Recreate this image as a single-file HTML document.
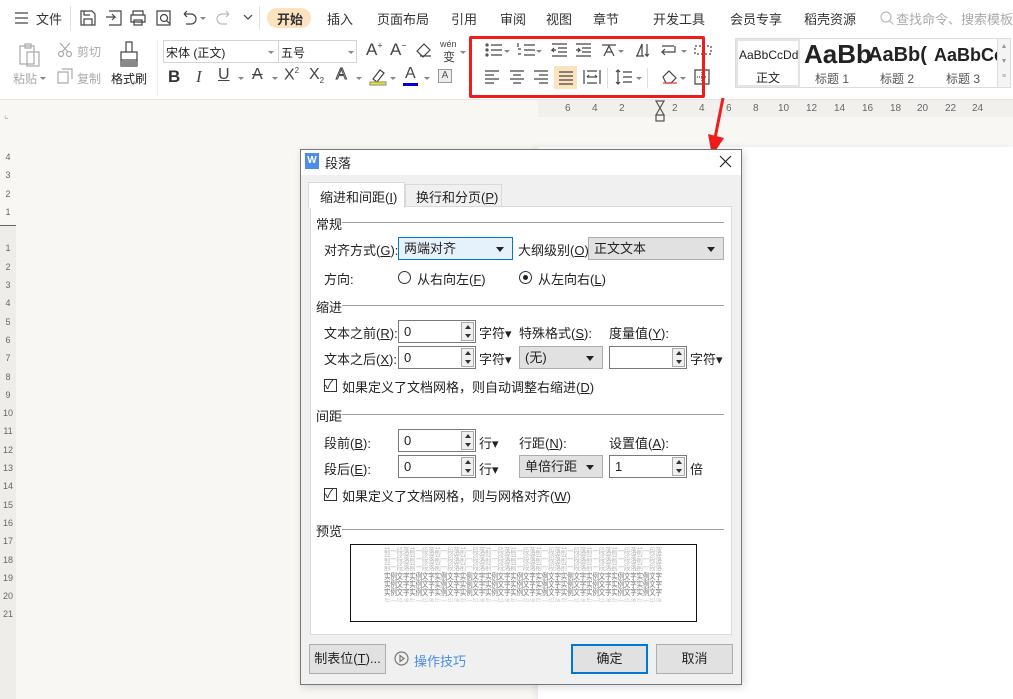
<!DOCTYPE html>
<html><head><meta charset="utf-8"><style>
*{margin:0;padding:0;box-sizing:border-box}
body{width:1013px;height:699px;overflow:hidden;position:relative;background:#f8f7f3;font-family:"Liberation Sans","Noto Sans CJK SC",sans-serif;font-size:12px;color:#222}
.a{position:absolute;white-space:nowrap}
.ic{position:absolute;stroke:#444;fill:none;stroke-width:1.2}
.tb{font-size:13px;color:#333}
.dd{position:absolute;width:0;height:0;border-left:3px solid transparent;border-right:3px solid transparent;border-top:3px solid #888}
.inp{position:absolute;background:#fff;border:1px solid #7a7a7a;height:23px;padding:2px 5px;font-size:13px;line-height:17px}
.sp{position:absolute;right:1px;top:1px;width:13px;height:19px;border:1px solid #aaa;background:#f0f0f0}
.sp:before{content:"";position:absolute;left:3px;top:2px;border-left:3px solid transparent;border-right:3px solid transparent;border-bottom:4px solid #333}
.sp:after{content:"";position:absolute;left:3px;bottom:2px;border-left:3px solid transparent;border-right:3px solid transparent;border-top:4px solid #333}
.sel{position:absolute;background:#e1e1e1;border:1px solid #adadad;height:23px;padding:2px 5px;font-size:13px;line-height:17px}
.sel i{position:absolute;right:8px;top:9px;border-left:4px solid transparent;border-right:4px solid transparent;border-top:5px solid #222}
.lb{font-size:13px;color:#222}
.grp{position:absolute;height:1px;background:#a0a0a0}
.cb{position:absolute;width:13px;height:13px;border:1px solid #333;background:#fff}
.btn{position:absolute;height:30px;background:#e1e1e1;border:1px solid #adadad;font-size:13px;text-align:center;line-height:28px}
.pv{position:absolute;left:33px;font-size:8px;letter-spacing:-.3px;line-height:8px;transform:scaleX(.82);transform-origin:0 0}
.rn{position:absolute;top:103px;font-size:10px;color:#666}
</style></head><body>
<!-- top bar -->
<div class="a" style="left:0;top:0;width:1013px;height:36px;background:#fff"></div>
<svg class="ic" style="left:14px;top:12px" width="16" height="12"><path d="M1 1h13M1 6h13M1 11h13"/></svg>
<span class="a tb" style="left:36px;top:9px">文件</span>
<div class="a" style="left:70px;top:6px;width:1px;height:24px;background:#e0e0e0"></div>
<svg class="ic" style="left:79px;top:9px" width="18" height="18"><path d="M2 2h11l3 3v11H2z M5 16v-6h8v6 M5 2v4h6"/></svg>
<svg class="ic" style="left:105px;top:9px" width="18" height="18"><path d="M4 2h12v14H4 M1 8h9l-3-3M10 8l-3 3"/></svg>
<svg class="ic" style="left:129px;top:9px" width="18" height="18"><path d="M4 6V2h10v4M2 6h14v7H2zM5 11h8v5H5z"/></svg>
<svg class="ic" style="left:155px;top:9px" width="18" height="18"><path d="M2 2h13v14H2z"/><circle cx="9" cy="9" r="3.5"/><path d="M11.5 11.5l3 3"/></svg>
<svg class="ic" style="left:180px;top:9px" width="18" height="18"><path d="M4 5h7a5 5 0 0 1 0 10H6M4 5l3-3M4 5l3 3"/></svg>
<div class="dd" style="left:200px;top:17px"></div>
<svg class="ic" style="left:215px;top:9px;stroke:#bbb" width="18" height="18"><path d="M14 5H7a5 5 0 0 0 0 10h5M14 5l-3-3M14 5l-3 3"/></svg>
<svg class="ic" style="left:243px;top:13px" width="10" height="8"><path d="M1 2l4 4 4-4"/></svg>
<div class="a" style="left:259px;top:6px;width:1px;height:24px;background:#e0e0e0"></div>
<div class="a" style="left:267px;top:8px;width:44px;height:20px;background:#fbe3c0;border-radius:10px"></div>
<span class="a tb" style="left:277px;top:9px;font-weight:bold">开始</span>
<span class="a tb" style="left:327px;top:9px">插入</span>
<span class="a tb" style="left:377px;top:9px">页面布局</span>
<span class="a tb" style="left:451px;top:9px">引用</span>
<span class="a tb" style="left:500px;top:9px">审阅</span>
<span class="a tb" style="left:546px;top:9px">视图</span>
<span class="a tb" style="left:593px;top:9px">章节</span>
<span class="a tb" style="left:653px;top:9px">开发工具</span>
<span class="a tb" style="left:730px;top:9px">会员专享</span>
<span class="a tb" style="left:804px;top:9px">稻壳资源</span>
<svg class="ic" style="left:879px;top:10px;stroke:#bbb" width="16" height="16"><circle cx="7" cy="7" r="5"/><path d="M10.5 10.5l4 4"/></svg>
<span class="a tb" style="left:896px;top:9px;color:#aaa">查找命令、搜索模板</span>
<!-- ribbon -->
<div class="a" style="left:0;top:36px;width:1013px;height:64px;background:#fff;border-bottom:1px solid #e8e6e2"></div>
<svg class="ic" style="left:17px;top:42px;stroke:#aaa" width="24" height="26"><path d="M3 4h14v18H3zM8 2h6v4H8zM10 10h12v14H10z"/></svg>
<span class="a" style="left:13px;top:70px;color:#aaa;font-size:12px">粘贴</span><div class="dd" style="left:40px;top:77px"></div>
<svg class="ic" style="left:57px;top:42px;stroke:#aaa" width="16" height="16"><circle cx="4" cy="12" r="2.5"/><circle cx="12" cy="12" r="2.5"/><path d="M5 10L13 1M11 10L3 1"/></svg>
<span class="a" style="left:77px;top:43px;color:#aaa">剪切</span>
<svg class="ic" style="left:57px;top:68px;stroke:#aaa" width="16" height="16"><path d="M1 4h10v11H1zM5 1h10v10"/></svg>
<span class="a" style="left:77px;top:70px;color:#aaa">复制</span>
<svg class="ic" style="left:117px;top:40px" width="24" height="28"><path d="M9 2h6v10H9zM4 12h16v14H4zM4 20h16" /><rect x="4" y="21" width="16" height="5" fill="#888" stroke="none"/></svg>
<span class="a" style="left:111px;top:70px;font-size:12px">格式刷</span>
<div class="a" style="left:157px;top:40px;width:1px;height:56px;background:#eee"></div>
<div class="a" style="left:163px;top:40px;width:194px;height:23px;border:1px solid #d5d5d5"></div>
<div class="a" style="left:278px;top:40px;width:1px;height:23px;background:#d5d5d5"></div>
<span class="a" style="left:166px;top:44px">宋体 (正文)</span><div class="dd" style="left:268px;top:51px"></div>
<span class="a" style="left:281px;top:44px">五号</span><div class="dd" style="left:348px;top:51px"></div>
<span class="a" style="left:366px;top:40px;font-size:17px;color:#444">A<sup style="font-size:9px">+</sup></span>
<span class="a" style="left:390px;top:40px;font-size:17px;color:#444">A<sup style="font-size:9px">−</sup></span>
<svg class="ic" style="left:415px;top:42px" width="18" height="16"><path d="M2 9l7-7 6 6-7 7zM5 14h11"/></svg>
<span class="a" style="left:440px;top:39px;font-size:9px;color:#444">wén</span><span class="a" style="left:443px;top:48px;font-size:12px;color:#444">变</span><div class="dd" style="left:460px;top:51px"></div>
<span class="a" style="left:168px;top:67px;font-size:17px;font-weight:bold;color:#333">B</span>
<span class="a" style="left:196px;top:67px;font-size:17px;font-style:italic;color:#444;font-family:'Liberation Serif'">I</span>
<span class="a" style="left:218px;top:66px;font-size:16px;text-decoration:underline;color:#444">U</span><div class="dd" style="left:238px;top:77px"></div>
<span class="a" style="left:252px;top:66px;font-size:16px;text-decoration:line-through;color:#444">A</span><div class="dd" style="left:272px;top:77px"></div>
<span class="a" style="left:284px;top:66px;font-size:16px;color:#444">X<sup style="font-size:8px">2</sup></span>
<span class="a" style="left:309px;top:66px;font-size:16px;color:#444">X<sub style="font-size:8px">2</sub></span>
<span class="a" style="left:336px;top:66px;font-size:16px;color:#fff;-webkit-text-stroke:1px #444">A</span><div class="dd" style="left:356px;top:77px"></div>
<svg class="ic" style="left:369px;top:68px" width="18" height="18"><path d="M4 11l7-9 4 3-7 9z"/><rect x="1" y="14" width="16" height="3" fill="#f5e600" stroke="#999"/></svg><div class="dd" style="left:390px;top:77px"></div>
<span class="a" style="left:405px;top:65px;font-size:16px;color:#444">A</span><div class="a" style="left:403px;top:83px;width:15px;height:3px;background:#0000dd"></div><div class="dd" style="left:424px;top:77px"></div>
<div class="a" style="left:438px;top:69px;width:14px;height:14px;border:1px solid #999;background:#eee;font-size:10px;text-align:center;line-height:12px;color:#555">A</div>
<!-- paragraph group -->
<svg class="ic" style="left:484px;top:42px" width="20" height="16"><path d="M7 3h11M7 8h11M7 13h11"/><circle cx="3" cy="3" r="1"/><circle cx="3" cy="8" r="1"/><circle cx="3" cy="13" r="1"/></svg><div class="dd" style="left:504px;top:50px"></div>
<svg class="ic" style="left:516px;top:42px" width="20" height="16"><path d="M8 3h11M8 8h11M8 13h11M2 1v4M2 7h3M2 12h3"/></svg><div class="dd" style="left:536px;top:50px"></div>
<svg class="ic" style="left:550px;top:42px" width="18" height="16"><path d="M2 2h15M8 6h9M8 10h9M2 14h15M6 8H2l2-2M2 8l2 2"/></svg>
<svg class="ic" style="left:574px;top:42px" width="18" height="16"><path d="M2 2h15M8 6h9M8 10h9M2 14h15M2 8h4l-2-2M6 8l-2 2"/></svg>
<svg class="ic" style="left:600px;top:42px" width="18" height="16"><path d="M2 3h14M4 14l5-10 5 10M6 10h6"/></svg><div class="dd" style="left:618px;top:50px"></div>
<svg class="ic" style="left:634px;top:42px" width="18" height="16"><path d="M2 14h8M3 14l5-12v12M13 2v12l-2-2M13 14l2-2"/></svg>
<svg class="ic" style="left:660px;top:42px" width="18" height="16"><path d="M2 4h12M15 4v6H2l3-3M2 10l3 3"/></svg><div class="dd" style="left:681px;top:50px"></div>
<svg class="ic" style="left:694px;top:44px" width="18" height="12"><path d="M1 2h16v8H1z" stroke-dasharray="2 2"/></svg>
<svg class="ic" style="left:484px;top:69px" width="16" height="16"><path d="M1 2h14M1 6h9M1 10h14M1 14h9"/></svg>
<svg class="ic" style="left:509px;top:69px" width="16" height="16"><path d="M1 2h14M4 6h8M1 10h14M4 14h8"/></svg>
<svg class="ic" style="left:533px;top:69px" width="16" height="16"><path d="M1 2h14M6 6h9M1 10h14M6 14h9"/></svg>
<div class="a" style="left:554px;top:66px;width:23px;height:23px;background:#fbe3c0"></div>
<svg class="ic" style="left:558px;top:70px" width="16" height="16"><path d="M1 2h14M1 6h14M1 10h14M1 14h14"/></svg>
<svg class="ic" style="left:583px;top:69px" width="18" height="16"><path d="M1 1v14M17 1v14M4 2h10M4 14h10M4 8h10M4 8l2-2M14 8l-2-2"/></svg>
<div class="a" style="left:607px;top:68px;width:1px;height:20px;background:#ddd"></div>
<svg class="ic" style="left:615px;top:69px" width="18" height="16"><path d="M3 1v14M1 3l2-2 2 2M1 13l2 2 2-2M8 3h9M8 8h9M8 13h9"/></svg><div class="dd" style="left:636px;top:77px"></div>
<div class="a" style="left:647px;top:68px;width:1px;height:20px;background:#ddd"></div>
<svg class="ic" style="left:660px;top:68px" width="20" height="18"><path d="M3 9l6-6 7 7-5 5H6z"/><path d="M3 15h14" stroke="#e33"/></svg><div class="dd" style="left:680px;top:77px"></div>
<svg class="ic" style="left:694px;top:69px" width="16" height="16"><path d="M1 1h14v14H1z"/><path d="M8 3v10M3 8h10" stroke-dasharray="1 1"/></svg>
<div class="a" style="left:469px;top:36px;width:236px;height:62px;border:3px solid #f01c1c;border-radius:2px"></div>
<!-- styles -->
<div class="a" style="left:735px;top:38px;width:276px;height:50px;border:1px solid #ddd;background:#fff"></div>
<div class="a" style="left:736px;top:39px;width:64px;height:48px;background:#fff;border:2px solid #e6e4e0"></div>
<span class="a" style="left:739px;top:48px;font-size:12px">AaBbCcDd</span>
<span class="a" style="left:756px;top:69px;font-size:12px">正文</span>
<div class="a" style="left:801px;top:40px;width:196px;height:46px;overflow:hidden">
<span class="a" style="left:3px;top:-1px;font-size:26px;font-weight:bold">AaBb</span>
<span class="a" style="left:67px;top:4px;font-size:20px;font-weight:bold">AaBb(</span>
<span class="a" style="left:133px;top:5px;font-size:18px;font-weight:bold">AaBbCc</span>
</div>
<span class="a" style="left:815px;top:70px;font-size:12px;color:#555">标题 1</span>
<span class="a" style="left:880px;top:70px;font-size:12px;color:#555">标题 2</span>
<span class="a" style="left:946px;top:70px;font-size:12px;color:#555">标题 3</span>
<div class="a" style="left:997px;top:39px;width:13px;height:48px;background:#f4f4f4;border-left:1px solid #ddd;font-size:7px;color:#999;text-align:center;line-height:15px">▲<br>▼<br>≡</div>
<!-- rulers -->
<div class="a" style="left:538px;top:100px;width:475px;height:17px;background:#f2f0ec"></div>
<span class="rn" style="left:565px">6</span>
<span class="rn" style="left:592px">4</span>
<span class="rn" style="left:619px">2</span>
<span class="rn" style="left:672px">2</span>
<span class="rn" style="left:699px">4</span>
<span class="rn" style="left:726px">6</span>
<span class="rn" style="left:753px">8</span>
<span class="rn" style="left:778px">10</span>
<span class="rn" style="left:806px">12</span>
<span class="rn" style="left:834px">14</span>
<span class="rn" style="left:862px">16</span>
<span class="rn" style="left:890px">18</span>
<span class="rn" style="left:917px">20</span>
<span class="rn" style="left:945px">22</span>
<span class="rn" style="left:972px">24</span>
<svg class="ic" style="left:654px;top:100px" width="12" height="24"><path d="M2 1h8L6 8zM6 8l-4 7h8zM2 15h8v6H2z" stroke="#555"/></svg>
<span class="a" style="left:4px;top:110px;font-size:10px;color:#aaa">⌞</span>
<div class="a" style="left:0;top:225px;width:16px;height:474px;background:#efede9;border-top:1px solid #666"></div>
<div class="a" style="left:2px;top:148px;font-size:9px;color:#666;line-height:18.3px;width:12px;text-align:center">4<br>3<br>2<br>1<br><br>1<br>2<br>3<br>4<br>5<br>6<br>7<br>8<br>9<br>10<br>11<br>12<br>13<br>14<br>15<br>16<br>17<br>18<br>19<br>20<br>21</div>
<!-- page -->
<div class="a" style="left:538px;top:147px;width:475px;height:552px;background:#fff;box-shadow:-4px 0 6px rgba(0,0,0,.06)"></div>
<!-- arrow -->
<svg class="a" style="left:700px;top:96px" width="30" height="62"><path d="M23 2L15 42" stroke="#f01c1c" stroke-width="3"/><path d="M8 38L12 60L24 42z" fill="#f01c1c"/></svg>
<!-- dialog -->
<div class="a" style="left:300px;top:149px;width:442px;height:536px;background:#f0f0f0;border:1px solid #777;box-shadow:2px 2px 8px rgba(0,0,0,.15)"></div>
<div class="a" style="left:301px;top:150px;width:440px;height:25px;background:#fff"></div>
<div class="a" style="left:305px;top:153px;width:14px;height:16px;background:#4a8ee8;color:#fff;font-size:10px;text-align:center;line-height:16px;font-weight:bold">W</div>
<span class="a" style="left:325px;top:153px;font-size:13px">段落</span>
<svg class="ic" style="left:719px;top:155px;stroke:#222" width="13" height="13"><path d="M1 1l11 11M12 1L1 12"/></svg>
<div class="a" style="left:310px;top:206px;width:422px;height:429px;background:#fff;border:1px solid #d9d9d9"></div>
<div class="a" style="left:308px;top:182px;width:97px;height:26px;background:#fff;border:1px solid #d9d9d9;border-bottom:none"></div>
<span class="a lb" style="left:320px;top:187px">缩进和间距(<u>I</u>)</span>
<div class="a" style="left:405px;top:184px;width:97px;height:22px;background:#f0f0f0;border:1px solid #d9d9d9;border-bottom:none"></div>
<span class="a lb" style="left:416px;top:187px">换行和分页(<u>P</u>)</span>
<span class="a lb" style="left:316px;top:214px">常规</span><div class="grp" style="left:342px;top:222px;width:382px"></div>
<span class="a lb" style="left:324px;top:240px">对齐方式(<u>G</u>):</span>
<div class="sel" style="left:398px;top:237px;width:115px;background:#e5f1fb;border-color:#0078d7">两端对齐<i></i></div>
<span class="a lb" style="left:518px;top:240px">大纲级别(<u>O</u>):</span>
<div class="sel" style="left:588px;top:237px;width:136px">正文文本<i></i></div>
<span class="a lb" style="left:324px;top:269px">方向:</span>
<div class="a" style="left:398px;top:271px;width:13px;height:13px;border:1px solid #333;border-radius:50%;background:#fff"></div>
<span class="a lb" style="left:417px;top:269px">从右向左(<u>F</u>)</span>
<div class="a" style="left:519px;top:271px;width:13px;height:13px;border:1px solid #333;border-radius:50%;background:#fff"><div style="margin:3px;width:5px;height:5px;border-radius:50%;background:#222"></div></div>
<span class="a lb" style="left:538px;top:269px">从左向右(<u>L</u>)</span>
<span class="a lb" style="left:316px;top:297px">缩进</span><div class="grp" style="left:342px;top:305px;width:382px"></div>
<span class="a lb" style="left:324px;top:323px">文本之前(<u>R</u>):</span>
<div class="inp" style="left:398px;top:320px;width:78px">0<div class="sp"></div></div>
<span class="a lb" style="left:479px;top:323px">字符▾</span>
<span class="a lb" style="left:519px;top:323px">特殊格式(<u>S</u>):</span>
<span class="a lb" style="left:609px;top:323px">度量值(<u>Y</u>):</span>
<span class="a lb" style="left:324px;top:349px">文本之后(<u>X</u>):</span>
<div class="inp" style="left:398px;top:346px;width:78px">0<div class="sp"></div></div>
<span class="a lb" style="left:479px;top:349px">字符▾</span>
<div class="sel" style="left:519px;top:346px;width:84px">(无)<i></i></div>
<div class="inp" style="left:609px;top:346px;width:78px"><div class="sp"></div></div>
<span class="a lb" style="left:690px;top:349px">字符▾</span>
<div class="cb" style="left:324px;top:379px"></div><span class="a" style="left:325px;top:376px;font-size:12px">✓</span>
<span class="a lb" style="left:342px;top:377px">如果定义了文档网格，则自动调整右缩进(<u>D</u>)</span>
<span class="a lb" style="left:316px;top:406px">间距</span><div class="grp" style="left:342px;top:414px;width:382px"></div>
<span class="a lb" style="left:324px;top:433px">段前(<u>B</u>):</span>
<div class="inp" style="left:398px;top:429px;width:78px">0<div class="sp"></div></div>
<span class="a lb" style="left:479px;top:433px">行▾</span>
<span class="a lb" style="left:519px;top:433px">行距(<u>N</u>):</span>
<span class="a lb" style="left:609px;top:433px">设置值(<u>A</u>):</span>
<span class="a lb" style="left:324px;top:459px">段后(<u>E</u>):</span>
<div class="inp" style="left:398px;top:455px;width:78px">0<div class="sp"></div></div>
<span class="a lb" style="left:479px;top:459px">行▾</span>
<div class="sel" style="left:519px;top:455px;width:84px">单倍行距<i></i></div>
<div class="inp" style="left:609px;top:455px;width:78px">1<div class="sp"></div></div>
<span class="a lb" style="left:690px;top:459px">倍</span>
<div class="cb" style="left:324px;top:488px"></div><span class="a" style="left:325px;top:485px;font-size:12px">✓</span>
<span class="a lb" style="left:342px;top:486px">如果定义了文档网格，则与网格对齐(<u>W</u>)</span>
<span class="a lb" style="left:316px;top:521px">预览</span><div class="grp" style="left:342px;top:529px;width:382px"></div>
<div class="a" style="left:350px;top:544px;width:347px;height:78px;border:1px solid #111;background:#fff;overflow:hidden">
<div class="pv" style="top:3px;color:#b8b8b8">前一段落前一段落前一段落前一段落前一段落前一段落前一段落前一段落前一段落前一段落前一段落</div>
<div class="pv" style="top:11px;color:#b8b8b8">前一段落前一段落前一段落前一段落前一段落前一段落前一段落前一段落前一段落前一段落前一段落</div>
<div class="pv" style="top:19px;color:#b8b8b8">前一段落前一段落前一段落前一段落前一段落前一段落前一段落前一段落前一段落前一段落前一段落</div>
<div class="pv" style="top:28px;color:#777">实例文字实例文字实例文字实例文字实例文字实例文字实例文字实例文字实例文字实例文字实例文字</div>
<div class="pv" style="top:36px;color:#777">实例文字实例文字实例文字实例文字实例文字实例文字实例文字实例文字实例文字实例文字实例文字</div>
<div class="pv" style="top:44px;color:#777">实例文字实例文字实例文字实例文字实例文字实例文字实例文字实例文字实例文字实例文字实例文字</div>
<div class="pv" style="top:53px;height:4px;overflow:hidden;color:#ccc">后一段落后一段落后一段落后一段落后一段落后一段落后一段落后一段落后一段落后一段落后一段落</div>
</div>
<div class="btn" style="left:309px;top:644px;width:77px">制表位(<u>T</u>)...</div>
<svg class="ic" style="left:394px;top:651px;stroke:#777" width="15" height="15"><circle cx="7.5" cy="7.5" r="6.5"/><path d="M6 4.5l4 3-4 3z"/></svg>
<span class="a" style="left:414px;top:651px;font-size:13px;color:#4a8ee8">操作技巧</span>
<div class="btn" style="left:571px;top:644px;width:77px;border:2px solid #0078d7;line-height:26px">确定</div>
<div class="btn" style="left:656px;top:644px;width:77px">取消</div>
</body></html>
